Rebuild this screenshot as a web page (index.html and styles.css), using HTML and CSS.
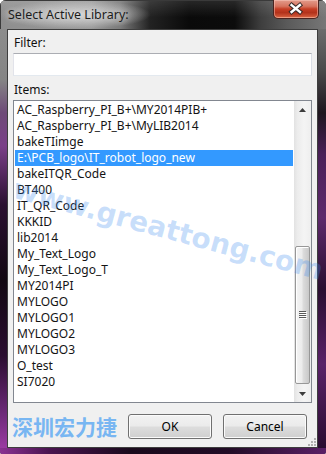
FILE: index.html
```html
<!DOCTYPE html>
<html>
<head>
<meta charset="utf-8">
<title>Select Active Library</title>
<link rel="stylesheet" href="styles.css">
</head>
<body>
<div class="window">
  <div class="titlebar">
    <span class="title">Select Active Library:</span>
    <div class="close">
      <svg width="46" height="19" viewBox="0 0 46 19">
        <path d="M19 6 L27.5 13 M27.5 6 L19 13" stroke="#3a2a28" stroke-width="4.6" stroke-linecap="square" fill="none"/>
        <path d="M19 6 L27.5 13 M27.5 6 L19 13" stroke="#ffffff" stroke-width="2.5" stroke-linecap="square" fill="none"/>
      </svg>
    </div>
  </div>
  <div class="middle">
    <div class="frame-left"></div>
    <div class="client">
      <div class="label">Filter:</div>
      <div class="input"></div>
      <div class="label items-label">Items:</div>
      <div class="listbox">
        <ul class="items">
          <li>AC_Raspberry_PI_B+\MY2014PIB+</li>
          <li>AC_Raspberry_PI_B+\MyLIB2014</li>
          <li>bakeTIimge</li>
          <li class="selected">E:\PCB_logo\IT_robot_logo_new</li>
          <li>bakeITQR_Code</li>
          <li>BT400</li>
          <li>IT_QR_Code</li>
          <li>KKKID</li>
          <li>lib2014</li>
          <li>My_Text_Logo</li>
          <li>My_Text_Logo_T</li>
          <li>MY2014PI</li>
          <li>MYLOGO</li>
          <li>MYLOGO1</li>
          <li>MYLOGO2</li>
          <li>MYLOGO3</li>
          <li>O_test</li>
          <li>SI7020</li>
        </ul>
        <div class="scrollbar">
          <div class="sb-btn">
            <svg width="7" height="4" viewBox="0 0 7 4"><path d="M0 4 L3.5 0 L7 4 Z" fill="#3c3c3c"/></svg>
          </div>
          <div class="sb-track">
            <div class="thumb">
              <svg width="8" height="8" viewBox="0 0 8 8">
                <path d="M0 0.5 H7 M0 2.5 H7 M0 4.5 H7 M0 6.5 H7" stroke="#5a5a5a" stroke-width="1"/>
                <path d="M1 1.5 H8 M1 3.5 H8 M1 5.5 H8 M1 7.5 H8" stroke="#ffffff" stroke-width="1"/>
              </svg>
            </div>
          </div>
          <div class="sb-btn">
            <svg width="7" height="4" viewBox="0 0 7 4"><path d="M0 0 L7 0 L3.5 4 Z" fill="#3c3c3c"/></svg>
          </div>
        </div>
      </div>
      <div class="buttons">
        <span class="brand">深圳宏力捷</span>
        <button class="btn">OK</button>
        <button class="btn">Cancel</button>
      </div>
      <svg class="sizegrip" width="8" height="8" viewBox="0 0 8 8">
        <rect x="6" y="0" width="2" height="2" fill="#b0b0b0"/>
        <rect x="3" y="3" width="2" height="2" fill="#b0b0b0"/>
        <rect x="6" y="3" width="2" height="2" fill="#b0b0b0"/>
        <rect x="0" y="6" width="2" height="2" fill="#b0b0b0"/>
        <rect x="3" y="6" width="2" height="2" fill="#b0b0b0"/>
        <rect x="6" y="6" width="2" height="2" fill="#b0b0b0"/>
      </svg>
    </div>
    <div class="frame-right"></div>
  </div>
  <div class="frame-bottom"></div>
  <div class="watermark">www.greattong.com</div>
</div>
</body>
</html>
```
FILE: styles.css
```css
html, body {
  margin: 0;
  padding: 0;
  background: #ffffff;
}

.window {
  position: relative;
  width: 326px;
  height: 454px;
  box-sizing: border-box;
  overflow: hidden;
  border-radius: 6px 6px 2px 2px;
  background: #4a4a4a;
  font-family: "Noto Sans", "Open Sans", sans-serif;
  display: flex;
  flex-direction: column;
}

.titlebar {
  height: 29px;
  flex: none;
  display: flex;
  align-items: flex-start;
  background:
    linear-gradient(180deg, rgba(255,255,255,0.12) 0, rgba(255,255,255,0) 60%),
    linear-gradient(90deg, #8e8e8e 0%, #9a9a9a 28%, #7a7a7a 37%, #222222 46%, #0a0a0a 58%, #0c0c0c 72%, #3e3e3e 80%, #5a5a5a 88%, #777777 100%);
  box-shadow: inset 1px 1px 0 #3a3a3a;
}

.title {
  font-size: 12.5px;
  line-height: 29px;
  color: #1c1c1c;
  padding: 0 22px 0 8px;
  background: radial-gradient(closest-side, rgba(225,225,225,0.8) 0%, rgba(205,205,205,0.5) 60%, rgba(200,200,200,0) 100%);
  text-shadow: 0 0 6px rgba(240,240,240,0.9);
}

.close {
  margin-left: auto;
  margin-right: 7px;
  width: 46px;
  height: 19px;
  box-sizing: border-box;
  border: 1px solid #4a2420;
  border-top: none;
  border-radius: 0 0 5px 5px;
  background: linear-gradient(180deg, #e39c8c 0%, #d6735e 35%, #c63e25 50%, #b3321b 70%, #cc5234 90%, #e07a52 100%);
  box-shadow: inset 0 0 0 1px rgba(255,210,200,0.45);
  display: flex;
}

.close svg {
  display: block;
  margin-left: -1px;
  margin-top: -1px;
}

.middle {
  flex: none;
  height: 419px;
  display: flex;
}

.frame-left {
  width: 7px;
  flex: none;
  background: linear-gradient(180deg, #8c8c8c 0%, #858585 12%, #6e4a78 20%, #7a3f88 28%, #2a1030 42%, #120812 60%, #2a0e30 78%, #6e2a7a 92%, #9a3aa2 100%);
}

.frame-right {
  width: 8px;
  flex: none;
  background: linear-gradient(180deg, #6c6c6c 0%, #4a4a4a 10%, #1e161e 20%, #4a2058 30%, #5e2a6c 45%, #2a0e30 62%, #5a2268 80%, #2a0c30 100%);
}

.frame-bottom {
  flex: none;
  height: 6px;
  background: linear-gradient(90deg, #8a3292 0%, #4a1450 15%, #1a0a1c 40%, #220c26 70%, #5a1f66 100%);
}

.client {
  position: relative;
  width: 311px;
  flex: none;
  box-sizing: border-box;
  border: 1px solid #3e3e3e;
  background: #f0f0f0;
  padding: 0 5px;
  display: flex;
  flex-direction: column;
}

.label {
  font-size: 12px;
  line-height: 16px;
  color: #101010;
  padding-left: 1px;
  margin-top: 5px;
}

.items-label {
  margin-top: 6px;
}

.input {
  margin-top: 2px;
  height: 23px;
  box-sizing: border-box;
  background: #ffffff;
  border: 1px solid;
  border-color: #abadb3 #dbdfe6 #e3e9ef #e2e3ea;
}

.listbox {
  margin-top: 2px;
  height: 303px;
  box-sizing: border-box;
  border: 1px solid #828790;
  background: #ffffff;
  display: flex;
}

.items {
  list-style: none;
  margin: 0;
  padding: 1px;
  flex: 1;
}

.items li {
  height: 16px;
  line-height: 16px;
  font-size: 12px;
  color: #141414;
  padding-left: 2px;
  white-space: nowrap;
}

.items li.selected {
  background: #3399ff;
  color: #ffffff;
}

.scrollbar {
  width: 17px;
  flex: none;
  display: flex;
  flex-direction: column;
  background: linear-gradient(90deg, #e2e2e2 0%, #ececec 20%, #f4f4f4 60%, #eeeeee 100%);
}

.sb-btn {
  height: 17px;
  flex: none;
  display: flex;
  align-items: center;
  justify-content: center;
}

.sb-btn svg {
  display: block;
}

.sb-track {
  flex: 1;
  display: flex;
  flex-direction: column;
  justify-content: flex-end;
  padding: 0 1px 1px 1px;
}

.thumb {
  height: 138px;
  box-sizing: border-box;
  border: 1px solid #979797;
  border-radius: 2px;
  background: linear-gradient(90deg, #f4f4f4 0%, #ececec 45%, #dcdcdc 55%, #c8c8c8 100%);
  box-shadow: inset 1px 1px 0 #ffffff;
  display: flex;
  align-items: center;
  justify-content: center;
}

.thumb svg {
  display: block;
}

.buttons {
  margin-top: 11px;
  height: 25px;
  display: flex;
  align-items: center;
  gap: 11px;
  padding-right: 5px;
}

.brand {
  flex: 1;
  margin-left: -1px;
  font-family: "Noto Sans CJK SC", sans-serif;
  font-weight: 700;
  font-size: 21px;
  line-height: 25px;
  color: #78b6f2;
  white-space: nowrap;
}

.btn {
  width: 85px;
  height: 25px;
  box-sizing: border-box;
  border: 1px solid #707070;
  border-radius: 3px;
  background: linear-gradient(180deg, #f2f2f2 0%, #ebebeb 48%, #dddddd 52%, #cfcfcf 100%);
  box-shadow: inset 0 0 0 1px #fbfbfb;
  font-family: "Noto Sans", sans-serif;
  font-size: 12px;
  color: #000000;
  padding: 0;
}

.sizegrip {
  position: absolute;
  right: 1px;
  bottom: 1px;
}

.watermark {
  position: absolute;
  left: -4px;
  top: 212px;
  width: 344px;
  line-height: 36px;
  text-align: center;
  white-space: nowrap;
  font-family: "DejaVu Sans", sans-serif;
  font-weight: 700;
  font-size: 28px;
  color: rgba(60, 140, 240, 0.28);
  transform: rotate(15deg);
  pointer-events: none;
}
```
